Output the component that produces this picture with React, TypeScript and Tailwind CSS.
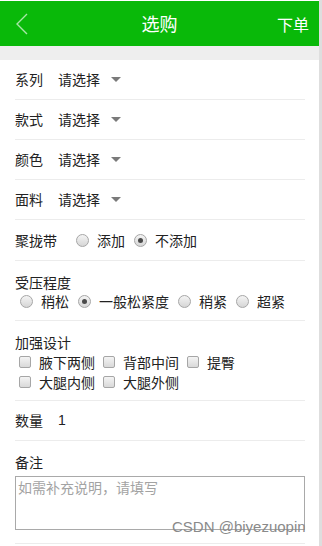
import React from "react";

const font = { fontFamily: '"Noto Sans CJK SC", "Noto Sans", sans-serif' };

function Radio({ checked }: { checked?: boolean }) {
  return (
    <span className="w-[13px] h-[13px] rounded-full border border-[#a6a6a6] bg-gradient-to-b from-[#f4f4f4] to-[#d6d6d6] flex items-center justify-center shrink-0">
      {checked && <span className="w-[5px] h-[5px] rounded-full bg-[#4a4a4a]" />}
    </span>
  );
}

function Checkbox() {
  return (
    <span className="w-[12px] h-[12px] rounded-[2px] border border-[#a6a6a6] bg-gradient-to-b from-[#f4f4f4] to-[#d9d9d9] shrink-0" />
  );
}

function Caret() {
  return (
    <svg width="10" height="5" viewBox="0 0 10 5" className="ml-[11px]">
      <polygon points="0,0 10,0 5,5" fill="#7a7a7a" />
    </svg>
  );
}

function SelectRow({ label }: { label: string }) {
  return (
    <div className="h-[40px] flex items-center border-b border-[#ececec] text-[14px] text-[#222]">
      <span>{label}</span>
      <span className="ml-[15px]">请选择</span>
      <Caret />
    </div>
  );
}

function RadioOpt({ label, checked, cls }: { label: string; checked?: boolean; cls?: string }) {
  return (
    <span className={"flex items-center " + (cls || "")}>
      <Radio checked={checked} />
      <span className="ml-[8px]">{label}</span>
    </span>
  );
}

function CheckOpt({ label, cls }: { label: string; cls?: string }) {
  return (
    <span className={"flex items-center " + (cls || "")}>
      <Checkbox />
      <span className="ml-[8px]">{label}</span>
    </span>
  );
}

export default function App() {
  return (
    <div className="w-[322px] h-[546px] overflow-hidden flex bg-white relative" style={font}>
      <div className="flex-1 flex flex-col">
        <div className="h-[1px] bg-white" />
        <div className="h-[45px] bg-[#09b909] flex items-center justify-between px-[16px]">
          <svg width="12" height="22" viewBox="0 0 12 22">
            <polyline points="11,1 1,11 11,21" fill="none" stroke="#a8e6a8" strokeWidth="1.4" />
          </svg>
          <span className="text-white text-[18px] ml-[14px]">选购</span>
          <span className="text-white text-[16px] -mr-[6px]">下单</span>
        </div>
        <div className="h-[14px] bg-[#eeeeee]" />
        <div className="pl-[15px] pr-[14px] text-[14px] text-[#222]">
          <SelectRow label="系列" />
          <SelectRow label="款式" />
          <SelectRow label="颜色" />
          <SelectRow label="面料" />
          <div className="h-[41px] flex items-center border-b border-[#ececec]">
            <span>聚拢带</span>
            <RadioOpt label="添加" cls="ml-[19px]" />
            <RadioOpt label="不添加" checked cls="ml-[9px]" />
          </div>
          <div className="h-[60px] flex flex-col justify-center border-b border-[#ececec] pt-[1px]">
            <span className="leading-[20px]">受压程度</span>
            <div className="flex items-center leading-[18px] pl-[5px]">
              <RadioOpt label="稍松" />
              <RadioOpt label="一般松紧度" checked cls="ml-[9px]" />
              <RadioOpt label="稍紧" cls="ml-[9px]" />
              <RadioOpt label="超紧" cls="ml-[9px]" />
            </div>
          </div>
          <div className="h-[80px] flex flex-col border-b border-[#ececec] pt-[11px]">
            <span className="leading-[20px]">加强设计</span>
            <div className="flex items-center leading-[20px] pl-[4px]">
              <CheckOpt label="腋下两侧" />
              <CheckOpt label="背部中间" cls="ml-[8px]" />
              <CheckOpt label="提臀" cls="ml-[8px]" />
            </div>
            <div className="flex items-center leading-[20px] pl-[4px]">
              <CheckOpt label="大腿内侧" />
              <CheckOpt label="大腿外侧" cls="ml-[8px]" />
            </div>
          </div>
          <div className="h-[40px] flex items-center border-b border-[#ececec]">
            <span>数量</span>
            <span className="ml-[15px]" style={{ fontFamily: '"Liberation Sans", sans-serif' }}>1</span>
          </div>
          <div className="pt-[11px] pb-[13px] border-b border-[#ececec]">
            <div className="leading-[20px]">备注</div>
            <textarea
              placeholder="如需补充说明，请填写"
              className="mt-[4px] block w-full h-[54px] border border-[#a9a9a9] text-[14px] px-[2px] py-0 leading-[20px] resize-none placeholder:text-[#a3a3a3] outline-none"
              style={font}
            />
          </div>
        </div>
      </div>
      <div className="w-[3px] bg-[#dedede]" />
      <span
        className="absolute left-[172px] top-[519px] text-[15px] text-[#8a8a8a] leading-[16px]"
        style={{ fontFamily: '"Liberation Sans", sans-serif' }}
      >
        CSDN @biyezuopin
      </span>
    </div>
  );
}
